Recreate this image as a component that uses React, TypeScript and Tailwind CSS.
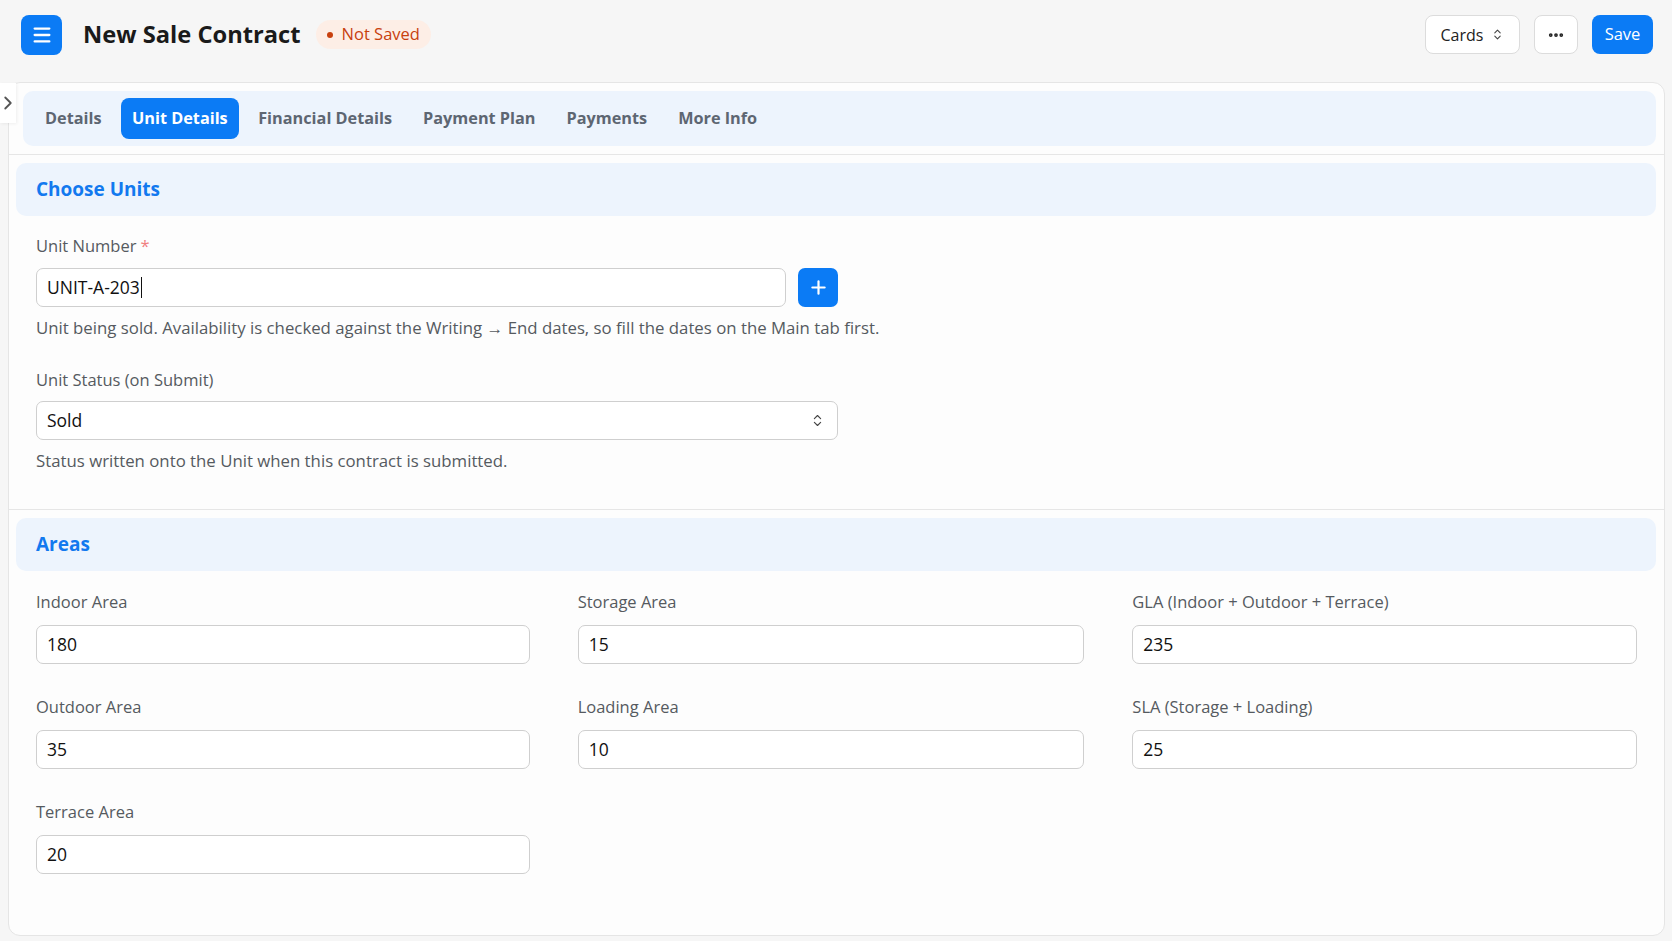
import { ChevronRight, ChevronsUpDown, Ellipsis, Menu, Plus } from 'lucide-react';
import type { FC, ReactNode } from 'react';

const tabs = ['Details', 'Unit Details', 'Financial Details', 'Payment Plan', 'Payments', 'More Info'];

const areaFields = [
  { label: 'Indoor Area', value: '180' },
  { label: 'Storage Area', value: '15' },
  { label: 'GLA (Indoor + Outdoor + Terrace)', value: '235' },
  { label: 'Outdoor Area', value: '35' },
  { label: 'Loading Area', value: '10' },
  { label: 'SLA (Storage + Loading)', value: '25' },
  { label: 'Terrace Area', value: '20' },
];

const SectionHead: FC<{ title: string }> = ({ title }) => (
  <div className="ml-[7px] mr-[8px] flex h-[53px] items-center rounded-[10px] bg-[#edf4fd] px-[20px]">
    <h2 className="text-[19px] font-bold text-[#1279ef]">{title}</h2>
  </div>
);

const Label: FC<{ children: ReactNode; required?: boolean }> = ({ children, required }) => (
  <label className="block h-[24px] text-[16.5px] leading-[24px] text-[#555a60]">
    {children}
    {required && <span className="ml-1 text-[#f08080]">*</span>}
  </label>
);

const Field: FC<{ children: ReactNode; className?: string }> = ({ children, className }) => (
  <div
    className={`flex h-[39px] items-center rounded-[7px] border border-[#cfcfcf] bg-white px-[10px] text-[17.5px] text-[#111] ${className ?? ''}`}
  >
    {children}
  </div>
);

const Help: FC<{ children: ReactNode }> = ({ children }) => (
  <p className="h-[24px] text-[16.8px] leading-[24px] text-[#555a60]">{children}</p>
);

export default function App() {
  return (
    <div className="relative min-h-[941px] bg-[#f6f6f6] font-['Open_Sans',sans-serif] text-[#222]">
      <header className="flex h-[69px] items-center pl-[21px] pr-[19px]">
        <button className="flex h-[40px] w-[41px] items-center justify-center rounded-[8px] bg-[#0b7bf5] text-white">
          <Menu size={22} strokeWidth={2.5} />
        </button>
        <h1 className="ml-[21px] text-[23.7px] font-bold text-[#1a1a1a]">New Sale Contract</h1>
        <span className="ml-[15px] flex h-[29px] items-center gap-[9px] rounded-full bg-[#fdeee6] px-[11px] text-[16.5px] text-[#c8400e]">
          <span className="h-[6px] w-[6px] rounded-full bg-[#c8400e]" />
          Not Saved
        </span>
        <div className="ml-auto flex items-center gap-[14px]">
          <button className="flex h-[39px] w-[95px] items-center justify-center gap-[8px] rounded-[8px] border border-[#dcdcdc] bg-white text-[16px] text-[#222]">
            Cards
            <ChevronsUpDown size={13} strokeWidth={2} className="text-[#444]" />
          </button>
          <button className="flex h-[39px] w-[44px] items-center justify-center rounded-[8px] border border-[#dcdcdc] bg-white text-[#222]">
            <Ellipsis size={18} strokeWidth={3} />
          </button>
          <button className="h-[39px] w-[61px] rounded-[8px] bg-[#0b7bf5] text-[16.5px] text-white">Save</button>
        </div>
      </header>

      <div className="absolute left-0 top-[83px] z-10 flex h-[40px] w-[16px] items-center justify-center bg-white shadow-[1px_1px_3px_rgba(0,0,0,0.06)]">
        <ChevronRight size={22} strokeWidth={2} className="shrink-0 text-[#555]" />
      </div>

      <main className="mb-[7px] ml-[8px] mr-[7px] mt-[13px] rounded-[12px] border border-[#e5e5e5] bg-[#fdfdfd] pb-[61px]">
        <nav className="ml-[14px] mr-[8px] mt-[8px] flex h-[55px] items-center gap-[7px] rounded-[10px] bg-[#edf4fd] px-[10px]">
          {tabs.map((tab) => (
            <button
              key={tab}
              className={
                tab === 'Unit Details'
                  ? 'h-[41px] rounded-[8px] bg-[#0b7bf5] px-[11.5px] text-[16.25px] font-bold text-white'
                  : 'h-[41px] rounded-[8px] px-[12px] text-[16.25px] font-bold text-[#5d6672]'
              }
            >
              {tab}
            </button>
          ))}
        </nav>
        <div className="mt-[8px] border-t border-[#e6e6e6]" />

        <section className="mt-[8px]">
          <SectionHead title="Choose Units" />
          <div className="px-[27px] pt-[18px]">
            <Label required>Unit Number</Label>
            <div className="mt-[10px] flex w-[802px] gap-[12px]">
              <Field className="flex-1">
                <span>UNIT-A-203</span>
                <span className="ml-px h-[21px] w-px bg-[#111]" />
              </Field>
              <button className="flex h-[39px] w-[40px] items-center justify-center rounded-[7px] bg-[#0b7bf5] text-white">
                <Plus size={21} strokeWidth={2.5} />
              </button>
            </div>
            <div className="mt-[9px]">
              <Help>
                Unit being sold. Availability is checked against the Writing → End dates, so fill the dates on the Main
                tab first.
              </Help>
            </div>

            <div className="mt-[28px]">
              <Label>Unit Status (on Submit)</Label>
            </div>
            <Field className="mt-[9px] w-[802px] justify-between">
              <span>Sold</span>
              <ChevronsUpDown size={15} strokeWidth={1.8} className="mr-[2px] text-[#444]" />
            </Field>
            <div className="mt-[9px]">
              <Help>Status written onto the Unit when this contract is submitted.</Help>
            </div>
          </div>
        </section>
        <div className="mt-[36px] border-t border-[#e6e6e6]" />

        <section className="mt-[8px]">
          <SectionHead title="Areas" />
          <div className="grid grid-cols-[493fr_506fr_504fr] gap-x-[48px] gap-y-[31px] px-[27px] pt-[19px]">
            {areaFields.map((f) => (
              <div key={f.label}>
                <Label>{f.label}</Label>
                <Field className="mt-[11px]">{f.value}</Field>
              </div>
            ))}
          </div>
        </section>
      </main>
    </div>
  );
}
